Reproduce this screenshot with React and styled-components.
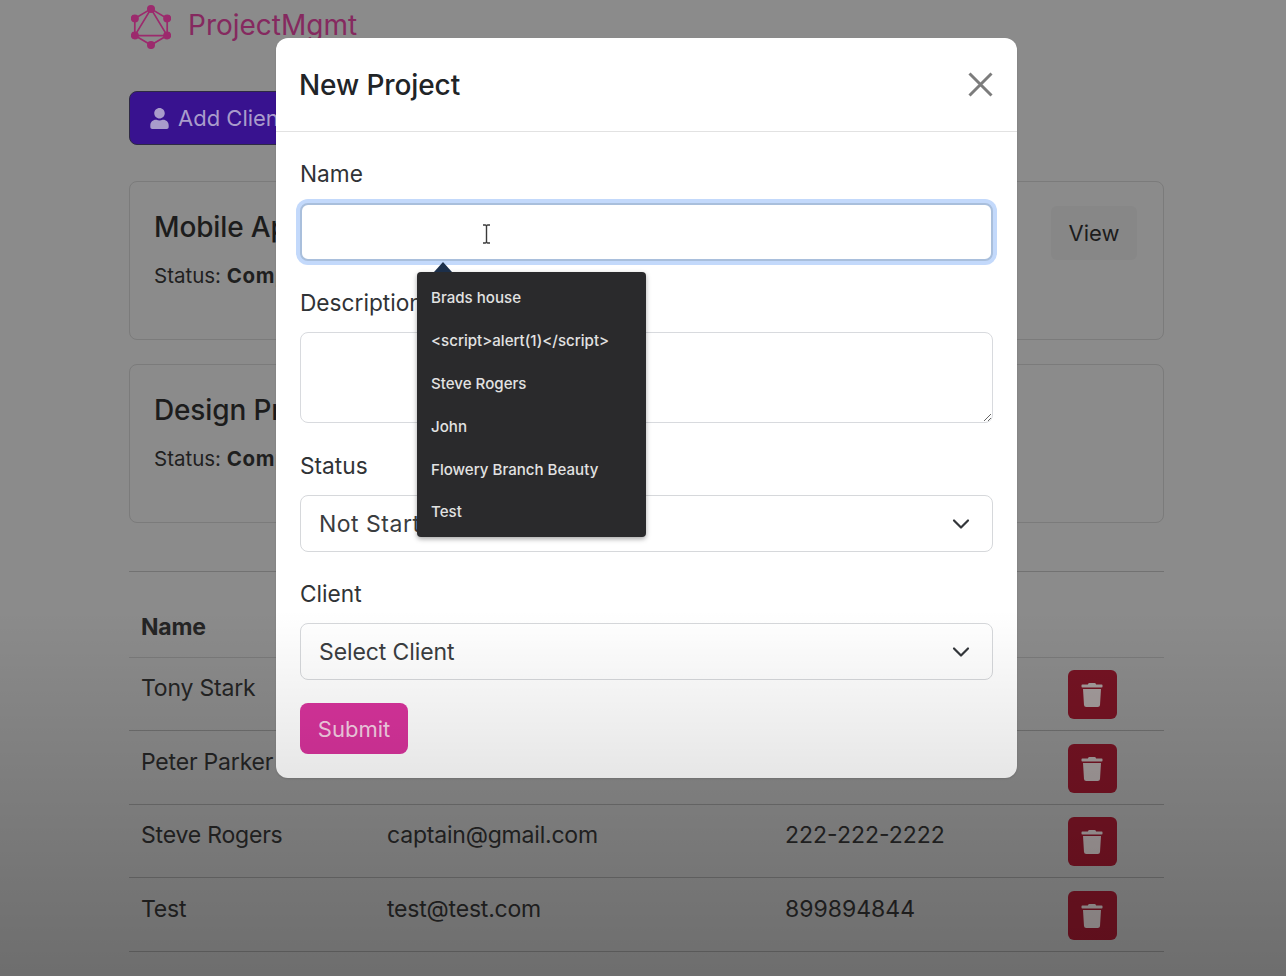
import React from "react";
import styled, { createGlobalStyle } from "styled-components";
import { FaTrash, FaUser } from "react-icons/fa";

const Global = createGlobalStyle`
  html, body { margin: 0; padding: 0; height: 976px; overflow: hidden; background: #8b8b8b; }
  * { box-sizing: border-box; }
  body { font-family: Inter, "Liberation Sans", sans-serif; color: #1d1d1d; }
`;

const Stage = styled.div`
  position: relative;
  width: 1286px;
  height: 976px;
  overflow: hidden;
  background: #8b8b8b;
`;

const Page = styled.div`
  width: 1035px;
  margin-left: 129px;
`;

const Header = styled.header`
  height: 52px;
  display: flex;
  align-items: center;
  gap: 17px;
  padding-left: 2px;
`;

const Brand = styled.span`
  margin-top: -3px;
  font-size: 28px;
  color: #85295f;
`;

const Toolbar = styled.div`
  padding-top: 39px;
  height: 129px;
`;

const AddButton = styled.button`
  width: 200px;
  height: 54px;
  display: flex;
  align-items: center;
  gap: 8px;
  padding: 0 19px;
  font: inherit;
  font-size: 22px;
  color: #a99ccb;
  background: #38128f;
  border: 1px solid #2e2a44;
  border-radius: 8px;
`;

const Cards = styled.div`
  display: flex;
  flex-direction: column;
  gap: 24px;
`;

const Card = styled.div`
  height: 159px;
  display: flex;
  justify-content: space-between;
  align-items: flex-start;
  padding: 24px 26px 0 24px;
  border: 1px solid #7b7b7b;
  border-radius: 8px;
`;

const CardTitle = styled.h5`
  margin: 3px 0 18px;
  font-size: 28px;
  font-weight: 500;
  line-height: 36px;
  letter-spacing: -0.15px;
  color: #1c1c1c;
`;

const CardStatus = styled.p`
  margin: 0;
  font-size: 20.5px;
  line-height: 26px;
  color: #1f1f1f;
  strong {
    letter-spacing: 0.6px;
  }
`;

const ViewButton = styled.button`
  width: 86px;
  height: 54px;
  font: inherit;
  font-size: 22px;
  color: #1c1c1c;
  background: #878787;
  border: 0;
  border-radius: 6px;
`;

const Rule = styled.hr`
  margin: 48px 0 0;
  border: 0;
  border-top: 1px solid #727272;
`;

const Table = styled.table`
  width: 100%;
  margin-top: 34px;
  border-collapse: collapse;
  table-layout: fixed;
  font-size: 23px;
  letter-spacing: -0.2px;
  color: #242424;
`;

const Th = styled.th`
  height: 51px;
  padding: 0 12px 9px;
  text-align: left;
  font-weight: 700;
  vertical-align: middle;
  border-bottom: 1px solid #7a7a7a;
`;

const Td = styled.td`
  height: 73.6px;
  padding: 0 12px 11px;
  vertical-align: middle;
  border-bottom: 1px solid #6f6f6f;
`;

const PhoneCell = styled(Td)`
  letter-spacing: 0;
`;

const ActionCell = styled(Td)`
  padding: 0 12px;
`;

const DeleteButton = styled.button`
  display: flex;
  align-items: center;
  justify-content: center;
  width: 49px;
  height: 49px;
  margin-top: 2px;
  padding: 1px 2px 0 0;
  color: #a49c9c;
  background: #751323;
  border: 0;
  border-radius: 6px;
  font-size: 24px;
`;

const Modal = styled.div`
  position: absolute;
  left: 276px;
  top: 38px;
  width: 741px;
  height: 740px;
  background: #fff;
  border-radius: 12px;
  box-shadow: 0 1px 2px rgba(0, 0, 0, 0.12);
`;

const ModalHeader = styled.div`
  height: 94px;
  display: flex;
  align-items: center;
  justify-content: space-between;
  padding: 0 24px;
  border-bottom: 1px solid #e2e2e2;
`;

const ModalTitle = styled.h5`
  margin: 0 0 0 -1px;
  font-size: 28px;
  font-weight: 500;
  letter-spacing: -0.1px;
  color: #212427;
`;

const CloseIcon = styled.svg`
  width: 25px;
  height: 25px;
  stroke: #7c7c7c;
  stroke-width: 3;
  fill: none;
`;

const ModalBody = styled.form`
  padding: 24px 24px 0;
`;

const Field = styled.div`
  margin-bottom: ${(p) => p.$mb}px;
`;

const Label = styled.label`
  display: block;
  height: 47px;
  font-size: 22.7px;
  line-height: 35px;
  color: #303336;
`;

const NameInput = styled.input`
  display: block;
  width: 693px;
  height: 58px;
  padding: 0 19px;
  border: 2px solid #a9bfdc;
  border-radius: 8px;
  outline: 0;
  background: #fff;
  box-shadow: 0 0 0 4px #c3d9fb;
`;

const TextBox = styled.textarea`
  display: block;
  width: 693px;
  height: 91px;
  padding: 8px 19px;
  border: 1px solid #d8dade;
  border-radius: 8px;
  outline: 0;
  background: #fff;
`;

const SelectBox = styled.div`
  display: flex;
  align-items: center;
  justify-content: space-between;
  width: 693px;
  height: 57px;
  padding: 0 22px 0 18px;
  border: 1px solid #d6d8db;
  border-radius: 8px;
  font-size: 23px;
  letter-spacing: ${(p) => p.$spacing}px;
  color: #3a3d40;
  background: #fff;
`;

const Chevron = styled.svg`
  width: 18px;
  height: 18px;
  stroke: #33363a;
  stroke-width: 2.2;
  fill: none;
  stroke-linecap: round;
  stroke-linejoin: round;
`;

const SubmitButton = styled.button`
  display: block;
  width: 108px;
  height: 51px;
  font: inherit;
  font-size: 22px;
  color: #f6cfe4;
  background: #d8339c;
  border: 0;
  border-radius: 8px;
`;

const Shade = styled.div`
  position: absolute;
  inset: 0;
  pointer-events: none;
  background: linear-gradient(to bottom, rgba(0, 0, 0, 0) 0, rgba(0, 0, 0, 0) 610px, rgba(0, 0, 0, 0.21) 976px);
`;

const Tooltip = styled.div`
  position: absolute;
  left: 417px;
  top: 272px;
  width: 229px;
  height: 265px;
  padding: 5px 14px 0;
  background: #2a2a2c;
  border-radius: 4px;
  box-shadow: 0 2px 5px rgba(0, 0, 0, 0.35);
  &::before {
    content: "";
    position: absolute;
    left: 17px;
    top: -10px;
    border-left: 9px solid transparent;
    border-right: 9px solid transparent;
    border-bottom: 10px solid #1c2f4a;
  }
`;

const TipItem = styled.div`
  height: 42.9px;
  font-size: 15.1px;
  font-weight: 500;
  line-height: 42.9px;
  color: #e2e2e2;
  white-space: nowrap;
`;

const Cursor = styled.svg`
  position: absolute;
  left: 480px;
  top: 224px;
  width: 13px;
  height: 20px;
  fill: none;
  stroke: #3a3a3a;
  stroke-width: 1.4;
`;

const Logo = () => (
  <svg width="40" height="45" viewBox="0 0 42 47" style={{ display: "block" }}>
    <g stroke="#9c2a6d" strokeWidth="1.8" fill="none">
      <path d="M21 5 L38 15 V33 L21 43 L4 33 V15 Z" />
      <path d="M21 5 L38 33 H4 Z" />
    </g>
    <g fill="#9c2a6d">
      <circle cx="21" cy="5" r="4.2" />
      <circle cx="38" cy="15" r="4.2" />
      <circle cx="38" cy="33" r="4.2" />
      <circle cx="21" cy="43" r="4.2" />
      <circle cx="4" cy="33" r="4.2" />
      <circle cx="4" cy="15" r="4.2" />
    </g>
  </svg>
);

const clients = [
  ["Tony Stark", "ironman@gmail.com", "343-567-4333"],
  ["Peter Parker", "spider@gmail.com", "223-567-3322"],
  ["Steve Rogers", "captain@gmail.com", "222-222-2222"],
  ["Test", "test@test.com", "899894844"],
];

const projects = [
  { title: "Mobile App", hasView: true },
  { title: "Design Prototype", hasView: false },
];

const tips = ["Brads house", "<script>alert(1)</script>", "Steve Rogers", "John", "Flowery Branch Beauty", "Test"];

const Arrow = () => (
  <Chevron viewBox="0 0 18 18">
    <path d="M2 5.5 L9 12.5 L16 5.5" />
  </Chevron>
);

export default function App() {
  return (
    <Stage>
      <Global />
      <Page>
        <Header>
          <Logo />
          <Brand>ProjectMgmt</Brand>
        </Header>
        <Toolbar>
          <AddButton>
            <FaUser size={21} />
            Add Client
          </AddButton>
        </Toolbar>
        <Cards>
          {projects.map((p) => (
            <Card key={p.title}>
              <div>
                <CardTitle>{p.title}</CardTitle>
                <CardStatus>
                  Status: <strong>Completed</strong>
                </CardStatus>
              </div>
              {p.hasView && <ViewButton>View</ViewButton>}
            </Card>
          ))}
        </Cards>
        <Rule />
        <Table>
          <colgroup>
            <col style={{ width: 246 }} />
            <col style={{ width: 398 }} />
            <col style={{ width: 283 }} />
            <col />
          </colgroup>
          <thead>
            <tr>
              <Th>Name</Th>
              <Th>Email</Th>
              <Th>Phone</Th>
              <Th />
            </tr>
          </thead>
          <tbody>
            {clients.map((c) => (
              <tr key={c[0]}>
                <Td>{c[0]}</Td>
                <Td>{c[1]}</Td>
                <PhoneCell>{c[2]}</PhoneCell>
                <ActionCell>
                  <DeleteButton>
                    <FaTrash />
                  </DeleteButton>
                </ActionCell>
              </tr>
            ))}
          </tbody>
        </Table>
      </Page>
      <Modal>
        <ModalHeader>
          <ModalTitle>New Project</ModalTitle>
          <CloseIcon viewBox="0 0 25 25">
            <path d="M1.5 1.5 L23.5 23.5 M23.5 1.5 L1.5 23.5" />
          </CloseIcon>
        </ModalHeader>
        <ModalBody>
          <Field $mb={24}>
            <Label>Name</Label>
            <NameInput />
          </Field>
          <Field $mb={25}>
            <Label>Description</Label>
            <TextBox />
          </Field>
          <Field $mb={24}>
            <Label>Status</Label>
            <SelectBox $spacing={0.5}>
              Not Started
              <Arrow />
            </SelectBox>
          </Field>
          <Field $mb={23}>
            <Label>Client</Label>
            <SelectBox $spacing={-0.1}>
              Select Client
              <Arrow />
            </SelectBox>
          </Field>
          <SubmitButton type="button">Submit</SubmitButton>
        </ModalBody>
      </Modal>
      <Tooltip>
        {tips.map((t) => (
          <TipItem key={t}>{t}</TipItem>
        ))}
      </Tooltip>
      <Cursor viewBox="0 0 13 20">
        <path d="M3 1 H5.5 Q6.5 1 6.5 3 V17 Q6.5 19 5.5 19 H3 M10 1 H7.5 Q6.5 1 6.5 3 M6.5 17 Q6.5 19 7.5 19 H10" />
      </Cursor>
      <Shade />
    </Stage>
  );
}
